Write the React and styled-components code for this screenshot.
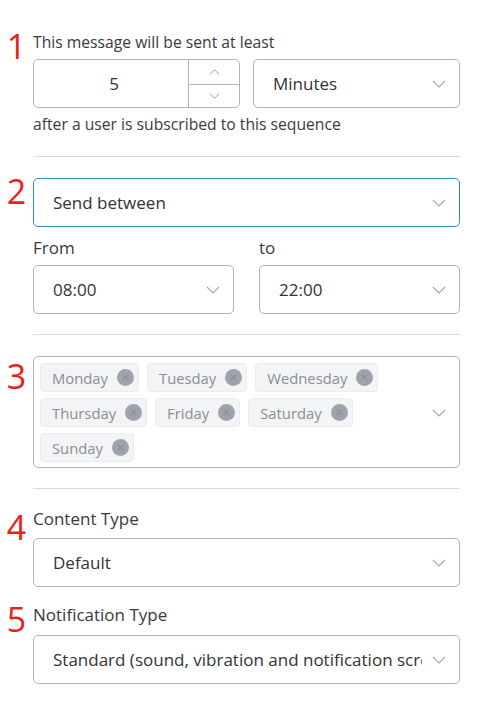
import React from "react";
import styled, { createGlobalStyle } from "styled-components";

const Global = createGlobalStyle`
  html, body { margin: 0; padding: 0; background: #ffffff; }
  body { font-family: "Open Sans", "Noto Sans", Arial, sans-serif; color: #333; }
  * { box-sizing: border-box; }
`;

const Page = styled.div`
  width: 490px;
  padding: 32px 30px 0 0;
  display: flex;
  flex-direction: column;
`;

const Row = styled.section`
  display: grid;
  grid-template-columns: 33px 1fr;
  align-items: start;
  margin-top: ${(p) => p.$mt || 0}px;
`;

const Marker = styled.div`
  font-size: 34px;
  line-height: 34px;
  height: 34px;
  color: #e8221a;
  text-align: center;
  margin-top: ${(p) => p.$offset || 0}px;
`;

const Content = styled.div`
  display: flex;
  flex-direction: column;
  min-width: 0;
`;

const SmallText = styled.div`
  font-size: 15.7px;
  line-height: 21px;
  color: #3a3a3a;
  margin-top: ${(p) => p.$mt || 0}px;
  margin-bottom: ${(p) => p.$mb || 0}px;
`;

const Label = styled.div`
  font-size: 17px;
  line-height: 23px;
  color: #3a3a3a;
  margin-top: ${(p) => p.$mt || 0}px;
  margin-bottom: ${(p) => p.$mb || 0}px;
`;

const Divider = styled.hr`
  border: 0;
  height: 1px;
  background: #dcdcdc;
  margin: ${(p) => p.$mt || 0}px 0 ${(p) => p.$mb || 0}px;
`;

const Pair = styled.div`
  display: grid;
  grid-template-columns: 1fr 1fr;
  column-gap: ${(p) => p.$gap}px;
`;

const Field = styled.div`
  display: flex;
  flex-direction: column;
`;

const Box = styled.div`
  height: 49px;
  border: 1px solid ${(p) => (p.$active ? "#2a90c8" : "#b4b4b4")};
  border-radius: 5px;
  background: #fff;
  display: flex;
  align-items: center;
`;

const SelectBox = styled(Box)`
  padding: 0 13px 0 19px;
  gap: 10px;
`;

const SelectText = styled.span`
  flex: 1;
  min-width: 0;
  font-size: 17px;
  color: #333;
  white-space: nowrap;
  overflow: hidden;
`;

const NumberBox = styled(Box)`
  overflow: hidden;
`;

const NumberValue = styled.span`
  flex: 1;
  text-align: center;
  padding-left: 6px;
  font-size: 17px;
  color: #333;
`;

const Spinner = styled.div`
  width: 51px;
  height: 100%;
  border-left: 1px solid #b4b4b4;
  display: grid;
  grid-template-rows: 1fr 1fr;
`;

const SpinBtn = styled.div`
  display: flex;
  align-items: center;
  justify-content: center;
  border-top: ${(p) => (p.$bottom ? "1px solid #b4b4b4" : "0")};
`;

const TagBox = styled.div`
  min-height: 112px;
  border: 1px solid #b4b4b4;
  border-radius: 5px;
  display: flex;
  align-items: center;
  padding: 6px 13px 4px 6px;
`;

const TagList = styled.div`
  flex: 1;
  display: flex;
  flex-wrap: wrap;
  gap: 6px 8px;
  padding-right: 28px;
  align-self: flex-start;
`;

const Tag = styled.div`
  height: 29px;
  display: inline-flex;
  align-items: center;
  gap: 9px;
  padding: 0 4px 0 11px;
  background: #f3f4f6;
  border: 1px solid #ebecee;
  border-radius: 4px;
  font-size: 14.8px;
  color: #8b8e95;
`;

const TagClose = styled.span`
  width: 17px;
  height: 17px;
  border-radius: 50%;
  background: #a0a3ac;
  display: inline-flex;
  align-items: center;
  justify-content: center;
`;

const Chevron = ({ w = 14, h = 8, color = "#a9a9a9", up = false }) => (
  <svg width={w} height={h} viewBox="0 0 14 8" style={{ flex: "none", display: "block" }}>
    <path
      d={up ? "M1 7 L7 1 L13 7" : "M1 1 L7 7 L13 1"}
      fill="none"
      stroke={color}
      strokeWidth="1.2"
    />
  </svg>
);

const CloseX = () => (
  <svg width="9" height="9" viewBox="0 0 9 9" style={{ display: "block" }}>
    <path d="M1.5 1.5 L7.5 7.5 M7.5 1.5 L1.5 7.5" stroke="#8d909a" strokeWidth="1.3" />
  </svg>
);

const Select = ({ value, active }) => (
  <SelectBox $active={active}>
    <SelectText>{value}</SelectText>
    <Chevron />
  </SelectBox>
);

const days = ["Monday", "Tuesday", "Wednesday", "Thursday", "Friday", "Saturday", "Sunday"];

export default function App() {
  return (
    <>
      <Global />
      <Page>
        <Row>
          <Marker $offset={-3}>1</Marker>
          <Content>
            <SmallText $mb={6}>This message will be sent at least</SmallText>
            <Pair $gap={13}>
              <NumberBox>
                <NumberValue>5</NumberValue>
                <Spinner>
                  <SpinBtn>
                    <Chevron w={11} h={6} color="#8f8f8f" up />
                  </SpinBtn>
                  <SpinBtn $bottom>
                    <Chevron w={11} h={6} color="#8f8f8f" />
                  </SpinBtn>
                </Spinner>
              </NumberBox>
              <Select value="Minutes" />
            </Pair>
            <SmallText $mt={6}>after a user is subscribed to this sequence</SmallText>
            <Divider $mt={21} $mb={21} />
          </Content>
        </Row>

        <Row>
          <Marker $offset={-4}>2</Marker>
          <Content>
            <Select value="Send between" active />
            <Pair $gap={25}>
              <Field>
                <Label $mt={9} $mb={6}>From</Label>
                <Select value="08:00" />
              </Field>
              <Field>
                <Label $mt={9} $mb={6}>to</Label>
                <Select value="22:00" />
              </Field>
            </Pair>
            <Divider $mt={20} $mb={21} />
          </Content>
        </Row>

        <Row>
          <Marker $offset={3}>3</Marker>
          <Content>
            <TagBox>
              <TagList>
                {days.map((d) => (
                  <Tag key={d}>
                    {d}
                    <TagClose>
                      <CloseX />
                    </TagClose>
                  </Tag>
                ))}
              </TagList>
              <Chevron />
            </TagBox>
            <Divider $mt={20} $mb={18} />
          </Content>
        </Row>

        <Row>
          <Marker $offset={3}>4</Marker>
          <Content>
            <Label $mb={8}>Content Type</Label>
            <Select value="Default" />
          </Content>
        </Row>

        <Row $mt={16}>
          <Marker $offset={-1}>5</Marker>
          <Content>
            <Label $mb={9}>Notification Type</Label>
            <Select value="Standard (sound, vibration and notification screen)" />
          </Content>
        </Row>
      </Page>
    </>
  );
}
